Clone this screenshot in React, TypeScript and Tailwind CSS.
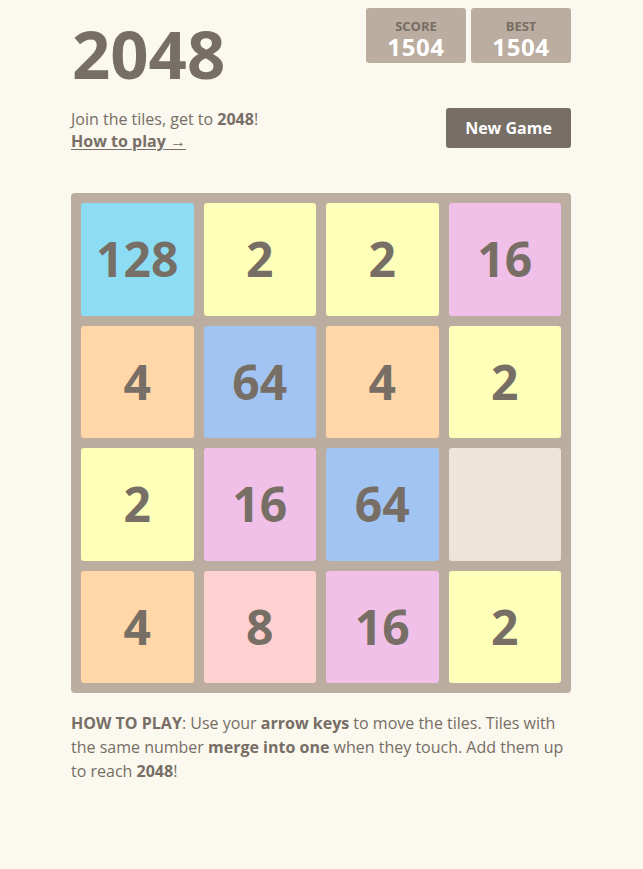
const board: (number | null)[][] = [
  [128, 2, 2, 16],
  [4, 64, 4, 2],
  [2, 16, 64, null],
  [4, 8, 16, 2],
];

const tileColors: Record<number, string> = {
  2: "bg-[#feffb9]",
  4: "bg-[#ffd7a8]",
  8: "bg-[#ffd0d0]",
  16: "bg-[#f0c0e8]",
  64: "bg-[#a1c4f2]",
  128: "bg-[#8cdcf4]",
};

function ScoreBox({ label, value }: { label: string; value: number }) {
  return (
    <div className="w-[100px] h-[55px] bg-[#bbada0] rounded-[3px] pt-[12px] flex flex-col items-center">
      <span className="text-[13px] leading-[13px] font-bold text-[#776e65] uppercase">{label}</span>
      <span className="mt-[2px] text-[24px] leading-[24px] font-bold text-white tracking-wide">{value}</span>
    </div>
  );
}

function Tile({ value }: { value: number | null }) {
  if (value === null) {
    return <div className="h-[112.5px] rounded-[3px] bg-[#eee4da]" />;
  }
  return (
    <div
      className={
        "h-[112.5px] rounded-[3px] flex items-center justify-center text-[48px] font-bold text-[#776e65] " +
        tileColors[value]
      }
    >
      {value}
    </div>
  );
}

export default function App() {
  return (
    <div
      className="min-h-screen bg-[#faf8ef] text-[#776e65]"
      style={{ fontFamily: '"Open Sans", "Noto Sans", sans-serif' }}
    >
      <div className="w-[500px] ml-[71px] pt-[8px]">
        <div className="flex justify-between items-start">
          <h1 className="mt-[12px] text-[67px] leading-none font-bold text-[#776e65] ml-[1px]">2048</h1>
          <div className="flex gap-[5px]">
            <ScoreBox label="Score" value={1504} />
            <ScoreBox label="Best" value={1504} />
          </div>
        </div>

        <div className="mt-[21px] flex justify-between items-start">
          <div className="text-[16px] leading-[22px]">
            <p>
              Join the tiles, get to <strong>2048</strong>!
            </p>
            <a className="font-bold underline underline-offset-2">
              How to play{" "}
              <span className="font-normal" style={{ fontFamily: '"Liberation Sans", sans-serif' }}>
                →
              </span>
            </a>
          </div>
          <button className="w-[125px] h-[40px] rounded-[3px] bg-[#776e65] text-white font-bold text-[16px]">
            New Game
          </button>
        </div>

        <div className="mt-[40px] w-[500px] h-[500px] bg-[#bbada0] rounded-[4px] p-[10px] grid grid-cols-4 gap-[10px]">
          {board.flat().map((v, i) => (
            <Tile key={i} value={v} />
          ))}
        </div>

        <p className="mt-[18px] text-[16px] leading-6">
          <strong>HOW TO PLAY</strong>: Use your <strong>arrow keys</strong> to move the tiles. Tiles with the
          same number <strong>merge into one</strong> when they touch. Add them up to reach <strong>2048</strong>!
        </p>
      </div>
    </div>
  );
}
